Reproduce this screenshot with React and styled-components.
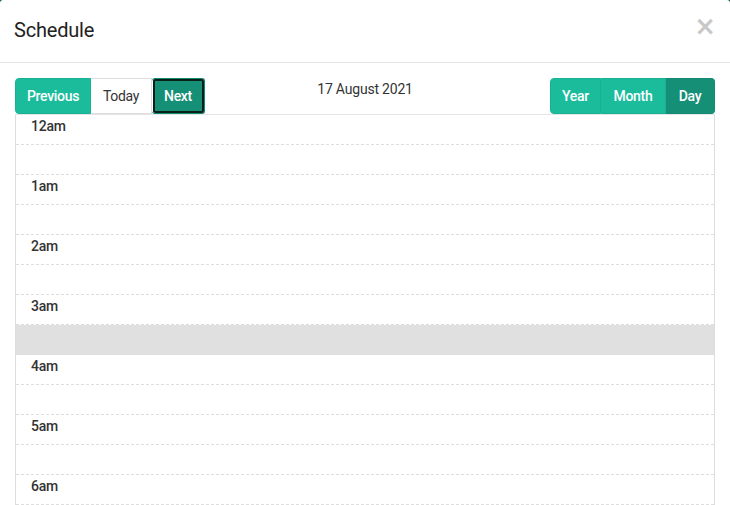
import React from "react";
import styled, { createGlobalStyle } from "styled-components";

const GlobalStyle = createGlobalStyle`
  html, body {
    margin: 0;
    padding: 0;
    background: #0b4a3c;
  }
  body {
    font-family: Roboto, "Liberation Sans", sans-serif;
    color: #333;
  }
`;

const Modal = styled.div`
  width: 730px;
  height: 505px;
  background: #fff;
  border-radius: 3px 3px 0 0;
  overflow: hidden;
  display: flex;
  flex-direction: column;
`;

const Header = styled.div`
  flex-shrink: 0;
  height: 63px;
  box-sizing: border-box;
  border-bottom: 1px solid #e5e5e5;
  display: flex;
  align-items: center;
  justify-content: space-between;
  padding: 0 14px 2px 14px;
`;

const Title = styled.h4`
  margin: 0;
  font-size: 20px;
  font-weight: 400;
  color: #222;
  letter-spacing: -0.2px;
`;

const Close = styled.button`
  border: 0;
  background: none;
  padding: 0;
  color: #c8c8c8;
  font-family: "DejaVu Sans", sans-serif;
  font-size: 26px;
  font-weight: 700;
  line-height: 1;
  cursor: pointer;
  display: flex;
  margin-top: -8px;
`;

const Body = styled.div`
  padding: 15px 15px 0;
`;

const Toolbar = styled.div`
  display: grid;
  grid-template-columns: 1fr auto 1fr;
  align-items: start;
`;

const Group = styled.div`
  display: flex;
  justify-self: ${(p) => (p.$right ? "end" : "start")};
`;

const Btn = styled.button`
  height: 36px;
  width: ${(p) => p.$w}px;
  padding: 0;
  font-family: inherit;
  font-size: 14px;
  font-weight: ${(p) => (p.$plain ? 400 : 500)};
  letter-spacing: -0.3px;
  color: ${(p) => (p.$plain ? "#333" : "#fff")};
  background: ${(p) =>
    p.$plain ? "#fff" : p.$active ? "#168f77" : "#1abc9c"};
  border: 1px solid ${(p) => (p.$plain ? "#ddd" : p.$active ? "#138a72" : "#18b193")};
  border-left-width: ${(p) => (p.$first ? "1px" : "0")};
  border-radius: 0;
  &:first-child {
    border-radius: 4px 0 0 4px;
  }
  &:last-child {
    border-radius: 0 4px 4px 0;
  }
  ${(p) =>
    p.$focus &&
    `
    outline: 2px solid #0b1f19;
    outline-offset: -3px;
    box-shadow: inset 0 0 0 1px #fff;
    border-radius: 3px !important;
  `}
`;

const DateLabel = styled.div`
  font-size: 14px;
  color: #333;
  padding-top: 3px;
  letter-spacing: -0.2px;
`;

const Grid = styled.div`
  border: 1px solid #ddd;
  border-top-color: #e5e5e5;
`;

const Slot = styled.div`
  height: 30px;
  box-sizing: border-box;
  border-bottom: 1px dashed #dedede;
  background: ${(p) => (p.$shaded ? "#e0e0e0" : "#fff")};
  padding: 3px 0 0 15px;
  font-size: 14px;
  font-weight: 500;
  color: #333;
  letter-spacing: -0.2px;
`;

const hours = ["12am", "1am", "2am", "3am", "4am", "5am", "6am"];

export default function App() {
  const slots = [];
  hours.forEach((h, i) => {
    slots.push({ label: h, shaded: false });
    slots.push({ label: "", shaded: i === 3 });
  });
  return (
    <>
      <GlobalStyle />
      <Modal>
        <Header>
          <Title>Schedule</Title>
          <Close aria-label="Close">×</Close>
        </Header>
        <Body>
          <Toolbar>
            <Group>
              <Btn $first $w={76}>Previous</Btn>
              <Btn $plain $w={61}>Today</Btn>
              <Btn $focus $active $w={53}>Next</Btn>
            </Group>
            <DateLabel>17 August 2021</DateLabel>
            <Group $right>
              <Btn $first $w={51}>Year</Btn>
              <Btn $w={65}>Month</Btn>
              <Btn $active $w={49}>Day</Btn>
            </Group>
          </Toolbar>
          <Grid>
            {slots.map((s, i) => (
              <Slot key={i} $shaded={s.shaded}>
                {s.label}
              </Slot>
            ))}
          </Grid>
        </Body>
      </Modal>
    </>
  );
}
